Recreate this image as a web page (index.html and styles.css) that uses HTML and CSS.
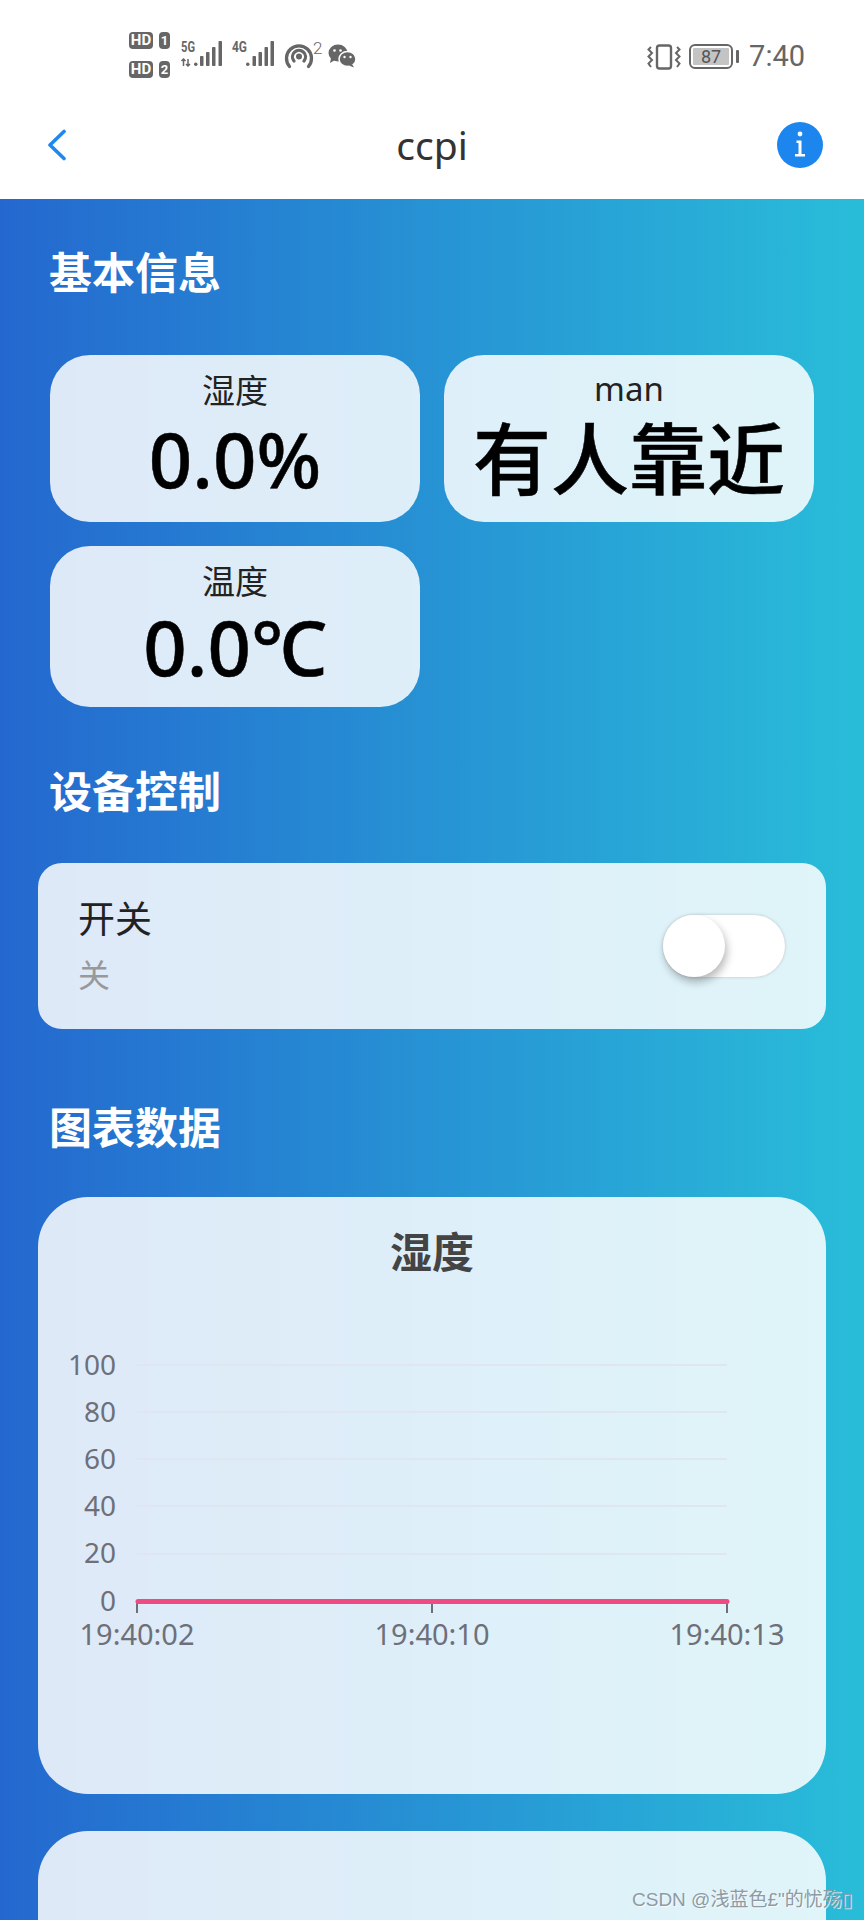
FILE: index.html
```html
<!DOCTYPE html>
<html lang="zh">
<head>
<meta charset="utf-8">
<title>ccpi</title>
<link rel="stylesheet" href="styles.css">
</head>
<body>
<div class="phone">
  <div class="status">
    <div class="status-left">
      <div class="hd-stack">
        <div class="hd-row"><span class="hd">HD</span><span class="sim">1</span></div>
        <div class="hd-row"><span class="hd">HD</span><span class="sim">2</span></div>
      </div>
      <svg class="ic-signal" viewBox="0 0 44 26" width="44" height="26">
        <text x="0" y="11" class="net" textLength="14" lengthAdjust="spacingAndGlyphs">5G</text>
        <path d="M2.500 25v-7M.5 20l2-2 2 2M7 18v7M5 23l2 2 2-2" class="arrow"/>
        <rect x="13" y="21.500" width="3.500" height="3.500" rx="1.700" class="bar"/>
        <rect x="19" y="15" width="3.500" height="10" rx=".8" class="bar"/>
        <rect x="25" y="11" width="3.500" height="14" rx=".8" class="bar"/>
        <rect x="31" y="6" width="3.500" height="19" rx=".8" class="bar"/>
        <rect x="37.500" y="0" width="3.500" height="25" rx=".8" class="bar"/>
      </svg>
      <svg class="ic-signal second" viewBox="0 0 44 26" width="44" height="26">
        <text x="0" y="11" class="net" textLength="15" lengthAdjust="spacingAndGlyphs">4G</text>
        <rect x="14" y="21.500" width="3.500" height="3.500" rx="1.700" class="bar"/>
        <rect x="20.500" y="15" width="3.500" height="10" rx=".8" class="bar"/>
        <rect x="26.500" y="11" width="3.500" height="14" rx=".8" class="bar"/>
        <rect x="32.500" y="6" width="3.500" height="19" rx=".8" class="bar"/>
        <rect x="38.500" y="0" width="3.500" height="25" rx=".8" class="bar"/>
      </svg>
      <svg class="ic-hotspot" viewBox="0 0 40 28" width="40" height="28">
        <path d="M5.500 24.500a12.500 12.500 0 1 1 19 0" class="arc"/>
        <path d="M10 19a6.500 6.500 0 1 1 10 0" class="arc"/>
        <circle cx="15" cy="14.500" r="3" class="dot"/>
        <text x="29" y="12" class="sup">2</text>
      </svg>
      <svg class="ic-wechat" viewBox="0 0 28 24" width="28" height="24">
        <ellipse cx="10" cy="9" rx="9.500" ry="8.500" class="dot"/>
        <path d="M3 14l-1 5 5-3z" class="dot"/>
        <ellipse cx="19.500" cy="15" rx="8.500" ry="7.500" stroke="#fff" stroke-width="1.500" class="dot"/>
        <path d="M24 20l2 3.500-5-2z" class="dot"/>
        <circle cx="6.500" cy="6.500" r="1.300" fill="#fff"/>
        <circle cx="12.500" cy="6.500" r="1.300" fill="#fff"/>
        <circle cx="16.500" cy="13" r="1.200" fill="#fff"/>
        <circle cx="22.500" cy="13" r="1.200" fill="#fff"/>
      </svg>
    </div>
    <div class="status-right">
      <svg class="ic-vibrate" viewBox="0 0 34 26" width="34" height="26">
        <rect x="10" y="1.500" width="14" height="23" rx="2.500" class="outline"/>
        <path d="M4 3l-2.500 2.500L5 9 1.500 12.500 5 16l-3.500 3.500L4 23M30 3l2.500 2.500L29 9l3.500 3.500L29 16l3.500 3.500L30 23" class="zig"/>
      </svg>
      <div class="battery"><span class="battery-body"><span class="battery-level">87</span></span><span class="battery-nib"></span></div>
      <span class="time">7:40</span>
    </div>
  </div>

  <header class="nav">
    <svg class="ic-back" viewBox="0 0 20 32" width="20" height="32"><path d="M17 2.500 3 16l14 13.500"/></svg>
    <h1 class="nav-title">ccpi</h1>
    <svg class="ic-info" viewBox="0 0 46 46" width="46" height="46">
      <circle cx="23" cy="23" r="23" class="info-bg"/>
      <circle cx="23" cy="12" r="2.400" class="info-fg"/>
      <path d="M19.500 18.500h5v13.500h3.500v2.500h-10V32h3.500V21h-2z" class="info-fg"/>
    </svg>
  </header>

  <main class="content">
    <h2 class="section-title first">基本信息</h2>
    <div class="tiles">
      <div class="tile"><div class="tile-label">湿度</div><div class="tile-value">0.0%</div></div>
      <div class="tile"><div class="tile-label latin">man</div><div class="tile-value cjk">有人靠近</div></div>
      <div class="tile short"><div class="tile-label">温度</div><div class="tile-value">0.0℃</div></div>
    </div>

    <h2 class="section-title device">设备控制</h2>
    <div class="control">
      <div>
        <div class="control-name">开关</div>
        <div class="control-state">关</div>
      </div>
      <div class="switch"><span class="thumb"></span></div>
    </div>

    <h2 class="section-title charts">图表数据</h2>
    <section class="chart-card">
      <h3 class="chart-title">湿度</h3>
      <svg class="chart" viewBox="0 0 788 320" width="788" height="320">
        <g class="grid">
          <line x1="98" x2="689" y1="0" y2="0"/>
          <line x1="98" x2="689" y1="47" y2="47"/>
          <line x1="98" x2="689" y1="94" y2="94"/>
          <line x1="98" x2="689" y1="141" y2="141"/>
          <line x1="98" x2="689" y1="189" y2="189"/>
        </g>
        <g class="axis-y">
          <text x="78" y="10">100</text>
          <text x="78" y="57">80</text>
          <text x="78" y="104">60</text>
          <text x="78" y="151">40</text>
          <text x="78" y="198">20</text>
          <text x="78" y="246">0</text>
        </g>
        <g class="ticks">
          <line x1="99" x2="99" y1="236" y2="248"/>
          <line x1="394" x2="394" y1="236" y2="248"/>
          <line x1="689" x2="689" y1="236" y2="248"/>
        </g>
        <line class="series" x1="100" x2="689" y1="236.500" y2="236.500"/>
        <g class="axis-x">
          <text x="99" y="280">19:40:02</text>
          <text x="394" y="280">19:40:10</text>
          <text x="689" y="280">19:40:13</text>
        </g>
      </svg>
    </section>
    <section class="chart-card next"></section>
  </main>
  <div class="watermark">CSDN @浅蓝色£"的忧殇▯</div>
</div>
</body>
</html>
```
FILE: styles.css
```css
* { box-sizing: border-box; }
html, body { margin: 0; padding: 0; }
body { width: 864px; height: 1920px; overflow: hidden; background: #fff; font-family: "Noto Sans", "Noto Sans CJK SC", sans-serif; color: #000; }
h1, h2, h3 { margin: 0; }
.phone { position: relative; width: 864px; height: 1920px; overflow: hidden; display: flex; flex-direction: column; }

.status { height: 100px; flex: none; display: flex; justify-content: space-between; align-items: flex-start; padding: 30px 59px 0 129px; }
.status-left { display: flex; align-items: flex-start; }
.status-right { display: flex; align-items: center; margin-top: 12px; }
.hd-stack { display: flex; flex-direction: column; gap: 12px; margin-top: 2px; }
.hd-row { display: flex; gap: 6px; }
.hd, .sim { height: 17px; border-radius: 4px; background: #666; color: #fff; font: 700 15px/17px "Roboto", sans-serif; text-align: center; }
.hd { width: 24px; }
.sim { width: 11px; font-size: 13px; }
.ic-signal { margin: 11px 0 0 11px; overflow: visible; }
.ic-signal.second { margin-left: 7px; }
.net { font: 700 14px "Roboto", sans-serif; fill: #666; }
.arrow { fill: none; stroke: #666; stroke-width: 1.5; }
.bar, .dot { fill: #666; }
.ic-hotspot { margin: 12px 0 0 8px; overflow: visible; }
.arc { fill: none; stroke: #666; stroke-width: 3.3; stroke-linecap: round; }
.sup { font: 300 17px "Roboto", sans-serif; fill: #666; }
.ic-wechat { margin: 14px 0 0 4px; }
.outline, .zig { fill: none; stroke: #666; stroke-width: 2.4; }
.zig { stroke-width: 2; }
.status-right .ic-vibrate { margin-left: -2px; }
.battery { display: flex; align-items: center; margin-left: 8px; }
.battery-body { width: 44px; height: 25px; border: 2px solid #666; border-radius: 6px; padding: 2px; display: block; }
.battery-level { display: block; width: 36px; height: 17px; background: #c4c4c4; color: #555; border-radius: 1px; font: 400 18px/17px "Roboto", sans-serif; text-align: center; }
.battery-nib { width: 3px; height: 13px; background: #666; border-radius: 1px; margin-left: 3px; }
.time { font: 400 29px/1 "Roboto", sans-serif; color: #666; margin-left: 10px; }

.nav { height: 99px; flex: none; display: flex; align-items: center; justify-content: space-between; padding: 0 41px 10px 47px; position: relative; }
.nav-title { font-size: 39px; font-weight: 400; color: #333; line-height: 1; position: absolute; left: 0; right: 0; text-align: center; top: 25px; }
.ic-back path { fill: none; stroke: #1f88ee; stroke-width: 3.6; stroke-linecap: round; stroke-linejoin: round; }
.info-bg { fill: #1c86ee; }
.info-fg { fill: #fff; }

.content { flex: 1; background: linear-gradient(90deg, #2468cf 0%, #29bdd9 100%); padding: 0 38px; }
.section-title { font-size: 43px; line-height: 54px; font-weight: 700; color: #fff; margin: 56px 0 0 11px; }
.section-title.first { margin-top: 47px; }
.section-title.device { margin-top: 58px; }
.section-title.charts { margin-top: 72px; }
.tiles { display: grid; grid-template-columns: 370px 370px; gap: 24px; padding: 0 12px; margin-top: 55px; }
.tile { height: 167px; border-radius: 40px; background: rgba(255, 255, 255, .85); text-align: center; padding-top: 14px; }
.tile.short { height: 161px; }
.tile-label { font-size: 33px; line-height: 44px; color: #222; }
.tile-label.latin { line-height: 40px; margin-bottom: 4px; }
.tile-value { font-size: 76px; line-height: 92px; font-weight: 500; -webkit-text-stroke: .5px #000; }
.tile-value.cjk { font-size: 78px; }
.tile.short .tile-value { line-height: 86px; }

.control { height: 166px; margin-top: 44px; border-radius: 24px; background: rgba(255, 255, 255, .85); display: flex; justify-content: space-between; align-items: center; padding: 0 41px 0 40px; }
.control-name { font-size: 37px; line-height: 50px; color: #222; margin-top: 2px; }
.control-state { font-size: 32px; line-height: 50px; color: #999; margin-top: 6px; }
.switch { position: relative; width: 122px; height: 62px; border-radius: 31px; background: #fff; box-shadow: 0 0 3px rgba(150, 140, 130, .5); }
.thumb { position: absolute; left: 0; top: 0; width: 62px; height: 62px; border-radius: 50%; background: #fff; box-shadow: 2px 5px 9px rgba(0, 0, 0, .28); }

.chart-card { height: 597px; margin-top: 42px; border-radius: 50px; background: rgba(255, 255, 255, .85); padding-top: 26px; }
.chart-card.next { height: 200px; margin-top: 37px; }
.chart-title { font-size: 42px; line-height: 58px; font-weight: 700; color: #444; text-align: center; }
.chart { display: block; margin-top: 84px; overflow: visible; }
.grid line { stroke: #e0e6f1; stroke-width: 2; }
.axis-y text { font: 400 28px "Noto Sans", sans-serif; fill: #6e7079; text-anchor: end; }
.axis-x text { font: 400 29px "Noto Sans", sans-serif; fill: #6e7079; text-anchor: middle; }
.ticks line { stroke: #6e7079; stroke-width: 2; }
.series { stroke: #ee4b82; stroke-width: 5; stroke-linecap: round; }

.watermark { position: absolute; left: 632px; top: 1888px; font: 400 19px/24px "Liberation Sans", "Noto Sans CJK SC", sans-serif; color: #8f9aa3; text-shadow: 1px 1px 0 rgba(255, 255, 255, .7); white-space: nowrap; }
```
